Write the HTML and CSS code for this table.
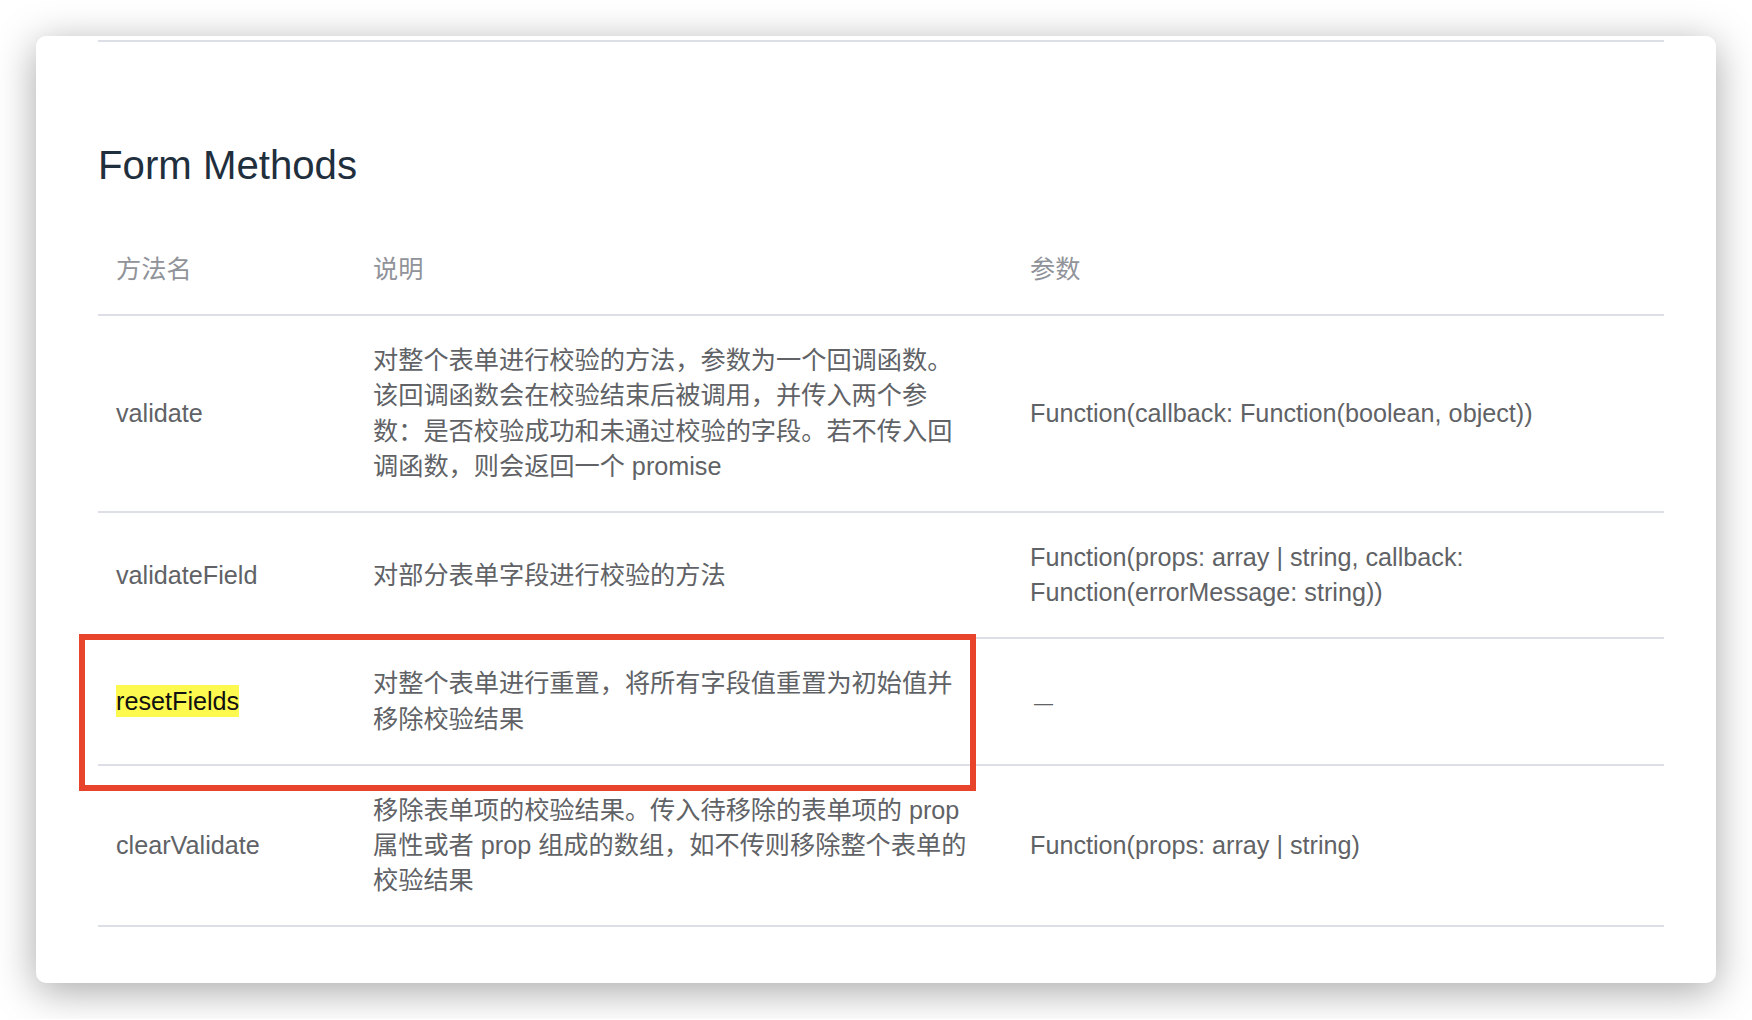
FILE: index.html
```html
<!DOCTYPE html>
<html lang="zh-CN">
<head>
  <meta charset="UTF-8">
  <meta name="viewport" content="width=device-width, initial-scale=1.0">
  <title>Form Methods</title>
  <link rel="stylesheet" href="styles.css">
</head>
<body>

<div class="doc-card">
  <div class="prev-rule"></div>

  <h3 class="section-title">Form Methods</h3>

  <table class="api-table">
    <thead>
      <tr>
        <th class="col-name">方法名</th>
        <th class="col-desc">说明</th>
        <th class="col-params">参数</th>
      </tr>
    </thead>
    <tbody>
      <tr>
        <td>validate</td>
        <td>对整个表单进行校验的方法，参数为一个回调函数。该回调函数会在校验结束后被调用，并传入两个参数：是否校验成功和未通过校验的字段。若不传入回调函数，则会返回一个 promise</td>
        <td>Function(callback: Function(boolean, object))</td>
      </tr>
      <tr>
        <td>validateField</td>
        <td>对部分表单字段进行校验的方法</td>
        <td>Function(props: array | string, callback: Function(errorMessage: string))</td>
      </tr>
      <tr>
        <td><mark class="hl">resetFields</mark></td>
        <td>对整个表单进行重置，将所有字段值重置为初始值并移除校验结果</td>
        <td><span class="empty">—</span></td>
      </tr>
      <tr>
        <td>clearValidate</td>
        <td>移除表单项的校验结果。传入待移除的表单项的 prop 属性或者 prop 组成的数组，如不传则移除整个表单的校验结果</td>
        <td>Function(props: array | string)</td>
      </tr>
    </tbody>
  </table>

  <!-- marco rojo de anotación sobre la fila resetFields -->
  <div class="annotation-box"></div>
</div>

</body>
</html>
```

FILE: styles.css
```css
body {
  margin: 0;
  padding: 0;
  background: #fff;
  font-family: "Liberation Sans", "Noto Sans CJK SC", sans-serif;
}

.doc-card {
  position: relative;
  margin: 36px;
  padding: 4px 52px 56px 62px;
  background: #fff;
  border-radius: 10px;
  box-shadow: 0 8px 40px rgba(0, 0, 0, 0.35);
}

.prev-rule {
  border-bottom: 2px solid #dcdfe6;
}

.section-title {
  margin: 101px 0 36px;
  font-size: 40.2px;
  line-height: 46px;
  font-weight: 400;
  color: #1f2f3d;
}

.api-table {
  width: 100%;
  border-collapse: collapse;
  table-layout: fixed;
  font-size: 25.2px;
  line-height: 35.2px;
}

.api-table th,
.api-table td {
  padding: 27px;
  border-bottom: 2px solid #dcdfe6;
  text-align: left;
  vertical-align: middle;
}

.api-table th:first-child,
.api-table td:first-child {
  padding-left: 18px;
}

.api-table th {
  color: #909399;
  font-weight: normal;
  white-space: nowrap;
}

.api-table td {
  color: #606266;
}

/* anchos de contenido: 248 y 657 menos el padding */
.col-name { width: 203px; }
.col-desc { width: 603px; }

.hl {
  background: #fdf94f;
  color: #111;
  padding: 2px 0;
}

.empty {
  display: inline-block;
  font-size: 19px;
  padding-left: 4px;
}

.annotation-box {
  position: absolute;
  left: 43px;
  top: 598px;
  width: 897px;
  height: 157px;
  box-sizing: border-box;
  border: 6px solid #e8432b;
}
```
